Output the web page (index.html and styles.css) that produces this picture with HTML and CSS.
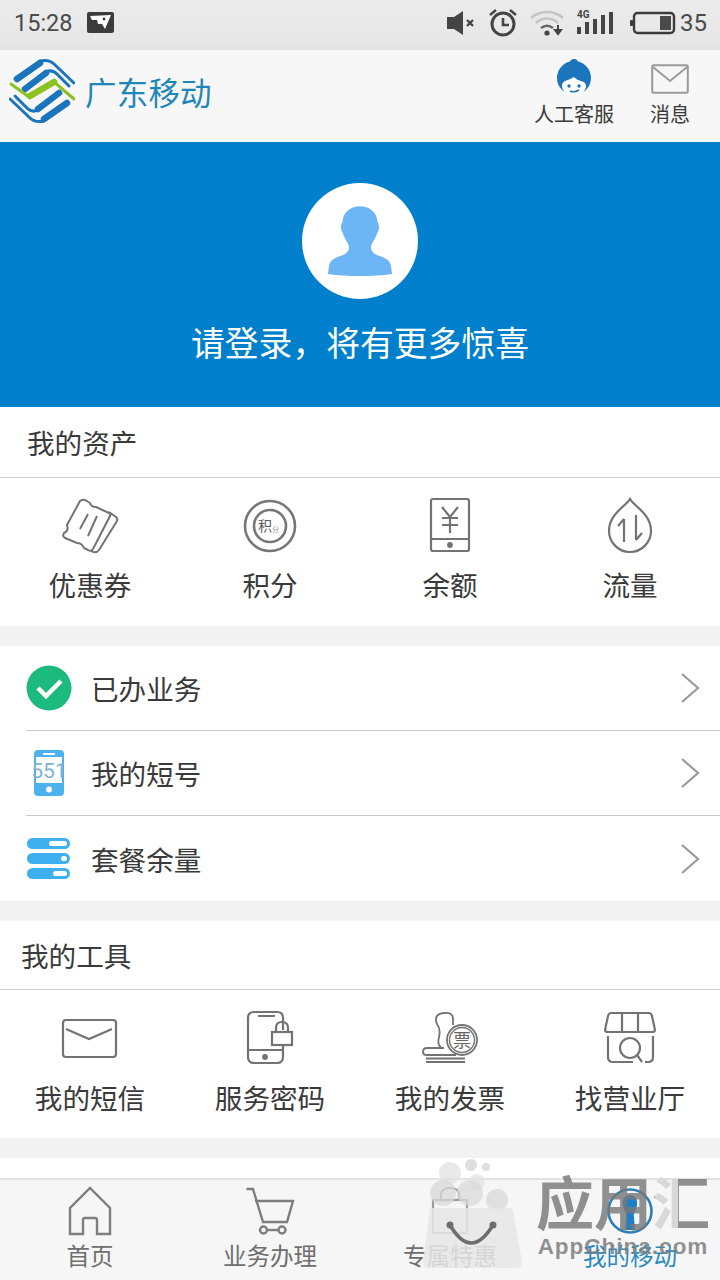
FILE: index.html
```html
<!DOCTYPE html>
<html lang="zh-CN">
<head>
<meta charset="utf-8">
<title>我的移动</title>
<link rel="stylesheet" href="styles.css">
</head>
<body>
<div class="app">
  <div class="status">
    <div class="status-left">
      <span class="clock">15:28</span>
      <svg class="st-pic" viewBox="0 0 28 22"><rect width="27" height="21" rx="2" fill="#3c3c3c"/><path d="M3 4 L24 3 L18 17 L15 12 L11 12 L10 8 L5 8Z" fill="#fff"/><circle cx="17" cy="7" r="1.4" fill="#3c3c3c"/></svg>
    </div>
    <div class="status-right">
      <svg class="st-mute" viewBox="0 0 30 24"><path d="M1 6h7l9-6v24l-9-6H1z" fill="#444"/><path d="M21 9l6 6M27 9l-6 6" stroke="#444" stroke-width="2.4"/></svg>
      <svg class="st-alarm" viewBox="0 0 30 30"><circle cx="15" cy="16" r="11" fill="none" stroke="#444" stroke-width="3"/><path d="M15 10v7h6" fill="none" stroke="#444" stroke-width="2.6"/><path d="M2 7l6-5M28 7l-6-5" stroke="#444" stroke-width="2.4"/></svg>
      <svg class="st-wifi" viewBox="0 0 34 28"><path d="M1 9C10 1 24 1 33 9" fill="none" stroke="#c4c4c4" stroke-width="2.6"/><path d="M6 14C12 8 22 8 28 14" fill="none" stroke="#c4c4c4" stroke-width="2.6"/><path d="M11 19c4-3 8-3 12 0" fill="none" stroke="#666" stroke-width="2.6"/><circle cx="17" cy="24" r="2.6" fill="#444"/><path d="M28 16v7M25 21h6l-3 4z" stroke="#444" stroke-width="2" fill="#444"/></svg>
      <div class="st-signal">
        <span class="st-4g">4G</span>
        <svg class="st-bars" viewBox="0 0 37 22"><rect x="0" y="15" width="4" height="7" fill="#444"/><rect x="8" y="10" width="4" height="12" fill="#444"/><rect x="16" y="7" width="4" height="15" fill="#444"/><rect x="24" y="3" width="4" height="19" fill="#444"/><rect x="32" y="0" width="4" height="22" fill="#444"/></svg>
      </div>
      <svg class="st-batt" viewBox="0 0 46 24"><rect x="4" y="2" width="40" height="20" rx="3.5" fill="none" stroke="#3c3c3c" stroke-width="2.4"/><rect x="0" y="9" width="3" height="6" rx="1" fill="#3c3c3c"/><rect x="30" y="5" width="11" height="14" fill="#4a4a4a"/></svg>
      <span class="pct">35</span>
    </div>
  </div>

  <header class="top">
    <div class="brand">
      <svg class="logo" viewBox="0 0 66 66">
        <g fill="none" stroke-linejoin="round" stroke-linecap="round">
          <g id="half">
            <path d="M8 21 L31 5" stroke="#1b75bc" stroke-width="6.500"/>
            <path d="M31 3 Q40 1 45 6 L65 25" stroke="#1b75bc" stroke-width="3"/>
            <path d="M16 31 L37 15" stroke="#1b75bc" stroke-width="6.500"/>
            <path d="M37 14 Q43 11 48 16 L60 28" stroke="#1b75bc" stroke-width="3"/>
          </g>
          <use href="#half" transform="rotate(180 33 33)"/>
          <path d="M2 26 L20 39 M45 24 L65 41" stroke="#8cc220" stroke-width="3"/>
          <path d="M21 38 L45 24" stroke="#8cc220" stroke-width="6.500"/>
        </g>
      </svg>
      <span class="brand-name">广东移动</span>
    </div>
    <div class="top-actions">
      <a class="top-action">
        <svg class="agent" viewBox="0 0 36 38">
          <circle cx="18" cy="19" r="17" fill="#1b75bc"/><circle cx="18" cy="4" r="4" fill="#1b75bc"/>
          <path d="M6 27C6 21 12 22 18 18C22 23 30 21 30 27C30 33 24 37 18 37C12 37 6 33 6 27Z" fill="#fff"/>
          <circle cx="13" cy="27" r="1.7" fill="#1b75bc"/><circle cx="23" cy="27" r="1.7" fill="#1b75bc"/>
          <path d="M14 32q4 2 9-1" fill="none" stroke="#1b75bc" stroke-width="1.5"/>
        </svg>
        <span>人工客服</span>
      </a>
      <a class="top-action">
        <svg class="mail-top" viewBox="0 0 38 30"><rect x="1.2" y="1.2" width="35.600" height="27.600" rx="1.500" fill="none" stroke="#9a9a9a" stroke-width="2"/><path d="M2 3L19 17L36 3" fill="none" stroke="#9a9a9a" stroke-width="2"/></svg>
        <span>消息</span>
      </a>
    </div>
  </header>

  <main class="content">
    <section class="hero">
      <div class="avatar">
        <svg viewBox="0 0 70 76"><path d="M35 0C45 0 53 6 54 16C55 20 57 21 55 27C53 31 52 35 48 41C46 46 47 50 53 53C60 56 68 57 69 66L70 74C50 77 20 77 0 74L1 66C2 57 10 56 17 53C23 50 24 46 22 41C18 35 17 31 15 27C13 21 15 20 16 16C17 6 25 0 35 0Z" fill="#6db6f6"/></svg>
      </div>
      <p class="hero-text">请登录，将有更多惊喜</p>
    </section>

    <section class="panel">
      <h2 class="panel-title assets-title">我的资产</h2>
      <div class="grid">
        <a class="cell">
          <svg class="ic" viewBox="0 0 60 60" fill="none" stroke="#737373" stroke-width="2" stroke-linejoin="round"><path d="M20 5Q22 3 25 4L30 7Q31 11 36 11L49 17Q51 18 50 20L33 53Q31 56 28 54L24 52Q22 47 17 47L5 42Q2 40 4 37Q9 35 7 29Z"/><path d="M49 16L56 21Q58 23 57 25L39 54Q36 58 31 55"/><path d="M28 18L20 33M37 20L28 40"/></svg>
          <span>优惠券</span>
        </a>
        <a class="cell">
          <svg class="ic" viewBox="0 0 60 60" fill="none" stroke="#777"><circle cx="30" cy="30" r="25" stroke-width="2.600"/><circle cx="30" cy="30" r="16" stroke-width="2.600"/><text x="18" y="35" class="ic-text" fill="#5c5c5c" stroke="none">积</text><text x="32" y="36" class="ic-text-small" fill="#999" stroke="none">分</text></svg>
          <span>积分</span>
        </a>
        <a class="cell">
          <svg class="ic" viewBox="0 0 60 60" fill="none" stroke="#737373" stroke-width="2.200"><rect x="11" y="3" width="38" height="52" rx="2"/><path d="M11 43H49"/><path d="M22 11L30 21L38 11M22 22H38M22 29H38M30 21V37"/><circle cx="30" cy="49" r="1.800" fill="#737373"/></svg>
          <span>余额</span>
        </a>
        <a class="cell">
          <svg class="ic" viewBox="0 0 60 60" fill="none" stroke="#737373" stroke-width="2.200"><path d="M30 3C26 10 9 18 9 35C9 46 18 56 30 56C42 56 51 46 51 35C51 18 34 10 30 3Z"/><path d="M24 23V46M24 23L18 30M36 19V44M36 44L42 37" /></svg>
          <span>流量</span>
        </a>
      </div>
    </section>

    <section class="panel list">
      <a class="row">
        <svg class="row-ic" viewBox="0 0 46 46"><circle cx="23" cy="23" r="22.500" fill="#1dba7f"/><path d="M12 23L20 31L35 16" fill="none" stroke="#fff" stroke-width="4.500"/></svg>
        <span class="row-label">已办业务</span>
        <svg class="chev" viewBox="0 0 20 32"><path d="M2 2L18 16L2 30" fill="none" stroke="#9a9a9a" stroke-width="2.200"/></svg>
      </a>
      <a class="row">
        <svg class="row-ic" viewBox="0 0 46 46"><rect x="8" y="0" width="30" height="46" rx="4" fill="#4bb2ee"/><rect x="10" y="7" width="26" height="26" fill="#fff"/><rect x="17" y="3" width="12" height="2" fill="#fff"/><circle cx="23" cy="39.500" r="3" fill="#fff"/><text x="23" y="28" class="ic-551" fill="#7db3cf" text-anchor="middle">551</text></svg>
        <span class="row-label">我的短号</span>
        <svg class="chev" viewBox="0 0 20 32"><path d="M2 2L18 16L2 30" fill="none" stroke="#9a9a9a" stroke-width="2.200"/></svg>
      </a>
      <a class="row">
        <svg class="row-ic" viewBox="0 0 46 46"><rect x="1" y="2" width="43" height="11" rx="5.500" fill="#3eb0f0"/><rect x="23" y="5" width="18" height="5" rx="2.500" fill="#fff"/><rect x="1" y="17" width="43" height="11" rx="5.500" fill="#3eb0f0"/><rect x="35" y="20" width="6" height="5" rx="2.500" fill="#fff"/><rect x="1" y="32" width="43" height="11" rx="5.500" fill="#3eb0f0"/><rect x="27" y="35" width="14" height="5" rx="2.500" fill="#fff"/></svg>
        <span class="row-label">套餐余量</span>
        <svg class="chev" viewBox="0 0 20 32"><path d="M2 2L18 16L2 30" fill="none" stroke="#9a9a9a" stroke-width="2.200"/></svg>
      </a>
    </section>

    <section class="panel">
      <h2 class="panel-title tools-title">我的工具</h2>
      <div class="grid tools-grid">
        <a class="cell">
          <svg class="ic" viewBox="0 0 60 60" fill="none" stroke="#737373" stroke-width="2.200"><rect x="3" y="11" width="53" height="37" rx="3"/><path d="M6 20L29 30L52 20"/></svg>
          <span>我的短信</span>
        </a>
        <a class="cell">
          <svg class="ic" viewBox="0 0 60 60" fill="none" stroke="#737373" stroke-width="2.200"><path d="M43 21V9Q43 3 37 3H14Q8 3 8 9V48Q8 54 14 54H37Q43 54 43 48V37"/><path d="M18 7H35M8 41H43"/><circle cx="25" cy="48" r="1.800" fill="#737373"/><rect x="32" y="23" width="20" height="13"/><path d="M36 23V19Q36 13 42 13Q48 13 48 19V23"/></svg>
          <span>服务密码</span>
        </a>
        <a class="cell">
          <svg class="ic" viewBox="0 0 60 60" fill="none" stroke="#737373" stroke-width="1.800"><path d="M21 38Q17 36 19 28Q21 20 17 15Q13 5 24 4Q33 3 33 10V16"/><path d="M24 39H7Q3 39 3 43Q3 46 7 46H36"/><path d="M6 49.500H45M6 53H45" stroke-width="1.800"/><circle cx="42" cy="31" r="15" fill="#fff"/><circle cx="42" cy="31" r="12.500" stroke-width="1.400"/><text x="42" y="37.500" class="ic-text-piao" fill="#666" stroke="none" text-anchor="middle">票</text></svg>
          <span>我的发票</span>
        </a>
        <a class="cell">
          <svg class="ic" viewBox="0 0 60 60" fill="none" stroke="#737373" stroke-width="2.200"><path d="M11 4H49Q51 4 52 7L55 21Q55 23 52 23H8Q5 23 5 21L8 7Q9 4 11 4ZM22 4V23M38 4V23"/><path d="M8 27V48Q8 53 13 53H33M53 27V48Q53 53 48 53H45"/><circle cx="30" cy="39" r="10"/><path d="M37 46L42 53"/></svg>
          <span>找营业厅</span>
        </a>
      </div>
    </section>

    <div class="tail"></div>
  </main>

  <nav class="tabs">
    <a class="tab">
      <svg class="tab-ic" viewBox="0 0 50 50" fill="none" stroke="#7e7e7e" stroke-width="2.400"><path d="M18 48V34Q18 32 20 32H30Q32 32 32 34V48H45V22L25 2L5 22V48Z"/></svg>
      <span>首页</span>
    </a>
    <a class="tab">
      <svg class="tab-ic" viewBox="0 0 50 50" fill="none" stroke="#7e7e7e" stroke-width="2.400"><path d="M1.500 3H8L18 36H42L48 15H10"/><circle cx="18.500" cy="44" r="3.500"/><circle cx="37" cy="44" r="3.500"/><path d="M22 44H33.500"/></svg>
      <span>业务办理</span>
    </a>
    <a class="tab">
      <svg class="tab-ic" viewBox="0 0 50 50" fill="none" stroke="#9b9b9b" stroke-width="2.200"><rect x="8" y="14" width="34" height="33"/><path d="M16 14V9Q16 2 25 2Q34 2 34 9V14"/></svg>
      <span>专属特惠</span>
    </a>
    <a class="tab tab-on">
      <svg class="tab-ic" viewBox="0 0 50 50"><circle cx="25" cy="25" r="21.500" fill="none" stroke="#2a7fba" stroke-width="2.600"/><path d="M25 9C30 9 33 13 32 19C31 25 28 27 29 31L30 44L20 44L21 31C22 27 19 25 18 19C17 13 20 9 25 9Z" fill="#1c80c8"/></svg>
      <span>我的移动</span>
    </a>
  </nav>

  <!-- app-store stamp laid across the tab bar -->
  <div class="stamp">
    <svg class="stamp-bag" viewBox="0 0 104 122">
      <circle cx="50" cy="8" r="6" fill="#d6d6d6" opacity=".8"/><circle cx="65" cy="10" r="4" fill="#d6d6d6" opacity=".8"/>
      <circle cx="29" cy="16" r="11" fill="#e0e0e0" opacity=".7"/><circle cx="56" cy="25" r="8" fill="#e2e2e2" opacity=".7"/>
      <circle cx="22" cy="36" r="13" fill="#d8d8d8" opacity=".75"/><circle cx="49" cy="36" r="13" fill="#dadada" opacity=".75"/><circle cx="76" cy="43" r="11" fill="#d8d8d8" opacity=".75"/>
      <path d="M9 51H89Q91 51 92 54L101 105Q101 111 95 111H8Q2 111 2 105Z" fill="#e6e6e6" opacity=".86"/>
      <path d="M29 68Q50 104 72 68" fill="none" stroke="#6d6d6d" stroke-width="3.500" stroke-linecap="round"/>
      <circle cx="29" cy="68" r="3.500" fill="#6d6d6d"/><circle cx="72" cy="68" r="3.500" fill="#6d6d6d"/>
    </svg>
    <div class="stamp-words">
      <span class="stamp-cn">应用汇</span>
      <span class="stamp-en">AppChina.com</span>
    </div>
  </div>
</div>
</body>
</html>
```
FILE: styles.css
```css
* { box-sizing: border-box; }
html, body { margin: 0; padding: 0; }
body {
  width: 720px;
  height: 1280px;
  overflow: hidden;
  background: #f2f2f2;
  font-family: "Noto Sans CJK SC", "Noto Sans", sans-serif;
  color: #3a3a3a;
}
p, h2 { margin: 0; font-weight: 400; }

.app {
  position: relative;
  width: 720px;
  height: 1280px;
  display: flex;
  flex-direction: column;
}

/* status bar */
.status {
  height: 50px;
  flex: none;
  display: flex;
  justify-content: space-between;
  align-items: center;
  padding: 0 13px 4px 14px;
  background: linear-gradient(#ebebeb, #e7e7e7 85%, #e2e2e2);
  font-family: Roboto, "Noto Sans", sans-serif;
  color: #4a4a4a;
}
.status-left, .status-right { display: flex; align-items: center; }
.clock { font-size: 23.5px; line-height: 30px; }
.st-pic { width: 28px; height: 22px; margin-left: 14px; }
.st-mute { width: 30px; height: 24px; }
.st-alarm { width: 30px; height: 30px; margin-left: 12px; }
.st-wifi { width: 34px; height: 28px; margin-left: 12px; }
.st-signal { position: relative; width: 37px; height: 24px; margin-left: 13px; }
.st-bars { display: block; width: 37px; height: 24px; }
.st-4g { position: absolute; left: 0; top: -2px; font-size: 10px; line-height: 11px; font-weight: 700; color: #444; }
.st-batt { width: 46px; height: 24px; margin-left: 16px; }
.pct { font-size: 24px; line-height: 30px; margin-left: 4px; }

/* header */
.top {
  height: 92px;
  flex: none;
  display: flex;
  justify-content: space-between;
  background: #f7f7f7;
  border-bottom: 1px solid #f2f2f2;
  padding: 0 30px 0 9px;
}
.brand { display: flex; align-items: center; padding-bottom: 10px; }
.logo { width: 66px; height: 66px; }
.brand-name { font-size: 31.5px; line-height: 40px; color: #1f87b8; margin-left: 10px; letter-spacing: 0.2px; }
.top-actions { display: flex; gap: 36px; }
.top-action { display: flex; flex-direction: column; align-items: center; font-size: 20px; line-height: 26px; color: #3a3a3a; padding-top: 9px; }
.agent { width: 36px; height: 38px; margin-bottom: 4px; }
.mail-top { width: 38px; height: 30px; margin: 5px 0 7px; }

.content { flex: 1; min-height: 0; overflow: hidden; display: flex; flex-direction: column; gap: 20px; }

/* banner */
.hero {
  height: 265px;
  flex: none;
  background: #0080cc;
  display: flex;
  flex-direction: column;
  align-items: center;
  padding-top: 41px;
  margin-bottom: -20px;
}
.avatar {
  width: 116px;
  height: 116px;
  border-radius: 50%;
  background: #fff;
  display: flex;
  align-items: center;
  justify-content: center;
}
.avatar svg { width: 64px; height: 74px; }
.hero-text { font-size: 33.8px; line-height: 44px; color: #fff; margin-top: 21px; }

/* white panels */
.panel { background: #fff; flex: none; }
.panel-title { font-size: 27.6px; line-height: 40px; height: 71px; border-bottom: 1px solid #cfcfcf; color: #3a3a3a; display: flex; align-items: center; }
.assets-title { padding-left: 27px; }
.tools-title { padding-left: 21px; height: 69px; }

.grid { display: grid; grid-template-columns: repeat(4, 180px); height: 148px; }
.cell { display: flex; flex-direction: column; align-items: center; padding-top: 18px; font-size: 27.6px; line-height: 36px; color: #3a3a3a; }
.tools-grid .cell { padding-top: 19px; }
.ic { width: 60px; height: 60px; margin-bottom: 10px; }
.ic-text { font-size: 14px; font-family: "Noto Sans CJK SC", sans-serif; }
.ic-text-small { font-size: 7px; font-family: "Noto Sans CJK SC", sans-serif; }
.ic-text-piao { font-size: 18px; font-family: "Noto Sans CJK SC", sans-serif; }
.ic-551 { font-size: 21px; font-family: Roboto, sans-serif; }

/* list rows */
.list { padding-left: 26px; height: 255px; }
.row { height: 85px; display: flex; align-items: center; border-bottom: 1px solid #c9c9c9; }
.row:last-child { border-bottom: 0; }
.row-ic { width: 46px; height: 46px; flex: none; }
.row-label { flex: 1; font-size: 27.6px; line-height: 36px; color: #3a3a3a; margin-left: 19px; }
.chev { width: 20px; height: 32px; margin-right: 20px; }

.tail { height: 40px; background: #fff; flex: none; }

/* tab bar */
.tabs {
  height: 102px;
  flex: none;
  display: grid;
  grid-template-columns: repeat(4, 180px);
  background: #f6f6f6;
  border-top: 2px solid #e2e2e2;
}
.tab { display: flex; flex-direction: column; align-items: center; padding-top: 6px; font-size: 23.5px; line-height: 30px; color: #6e6e6e; }
.tab-ic { width: 50px; height: 50px; margin-bottom: 4px; }
.tab-on { color: #2a88c0; }

/* stamp */
.stamp {
  position: absolute;
  left: 421px;
  top: 1157px;
  display: flex;
  pointer-events: none;
}
.stamp-bag { width: 104px; height: 122px; }
.stamp-words { display: flex; flex-direction: column; align-items: center; margin-left: 11px; margin-top: 10px; }
.stamp-cn {
  font-size: 58px;
  line-height: 66px;
  font-weight: 700;
  background: linear-gradient(90deg, rgba(120,120,120,.82) 119px, #d8d8d8 119px, #d8d8d8 142px, rgba(120,120,120,.82) 142px);
  -webkit-background-clip: text;
  background-clip: text;
  color: transparent;
}
.stamp-en { font-family: "Liberation Sans", sans-serif; font-size: 22.5px; line-height: 24px; margin-top: 2px; font-weight: 700; color: rgba(125,125,125,.85); letter-spacing: 1px; }
```
